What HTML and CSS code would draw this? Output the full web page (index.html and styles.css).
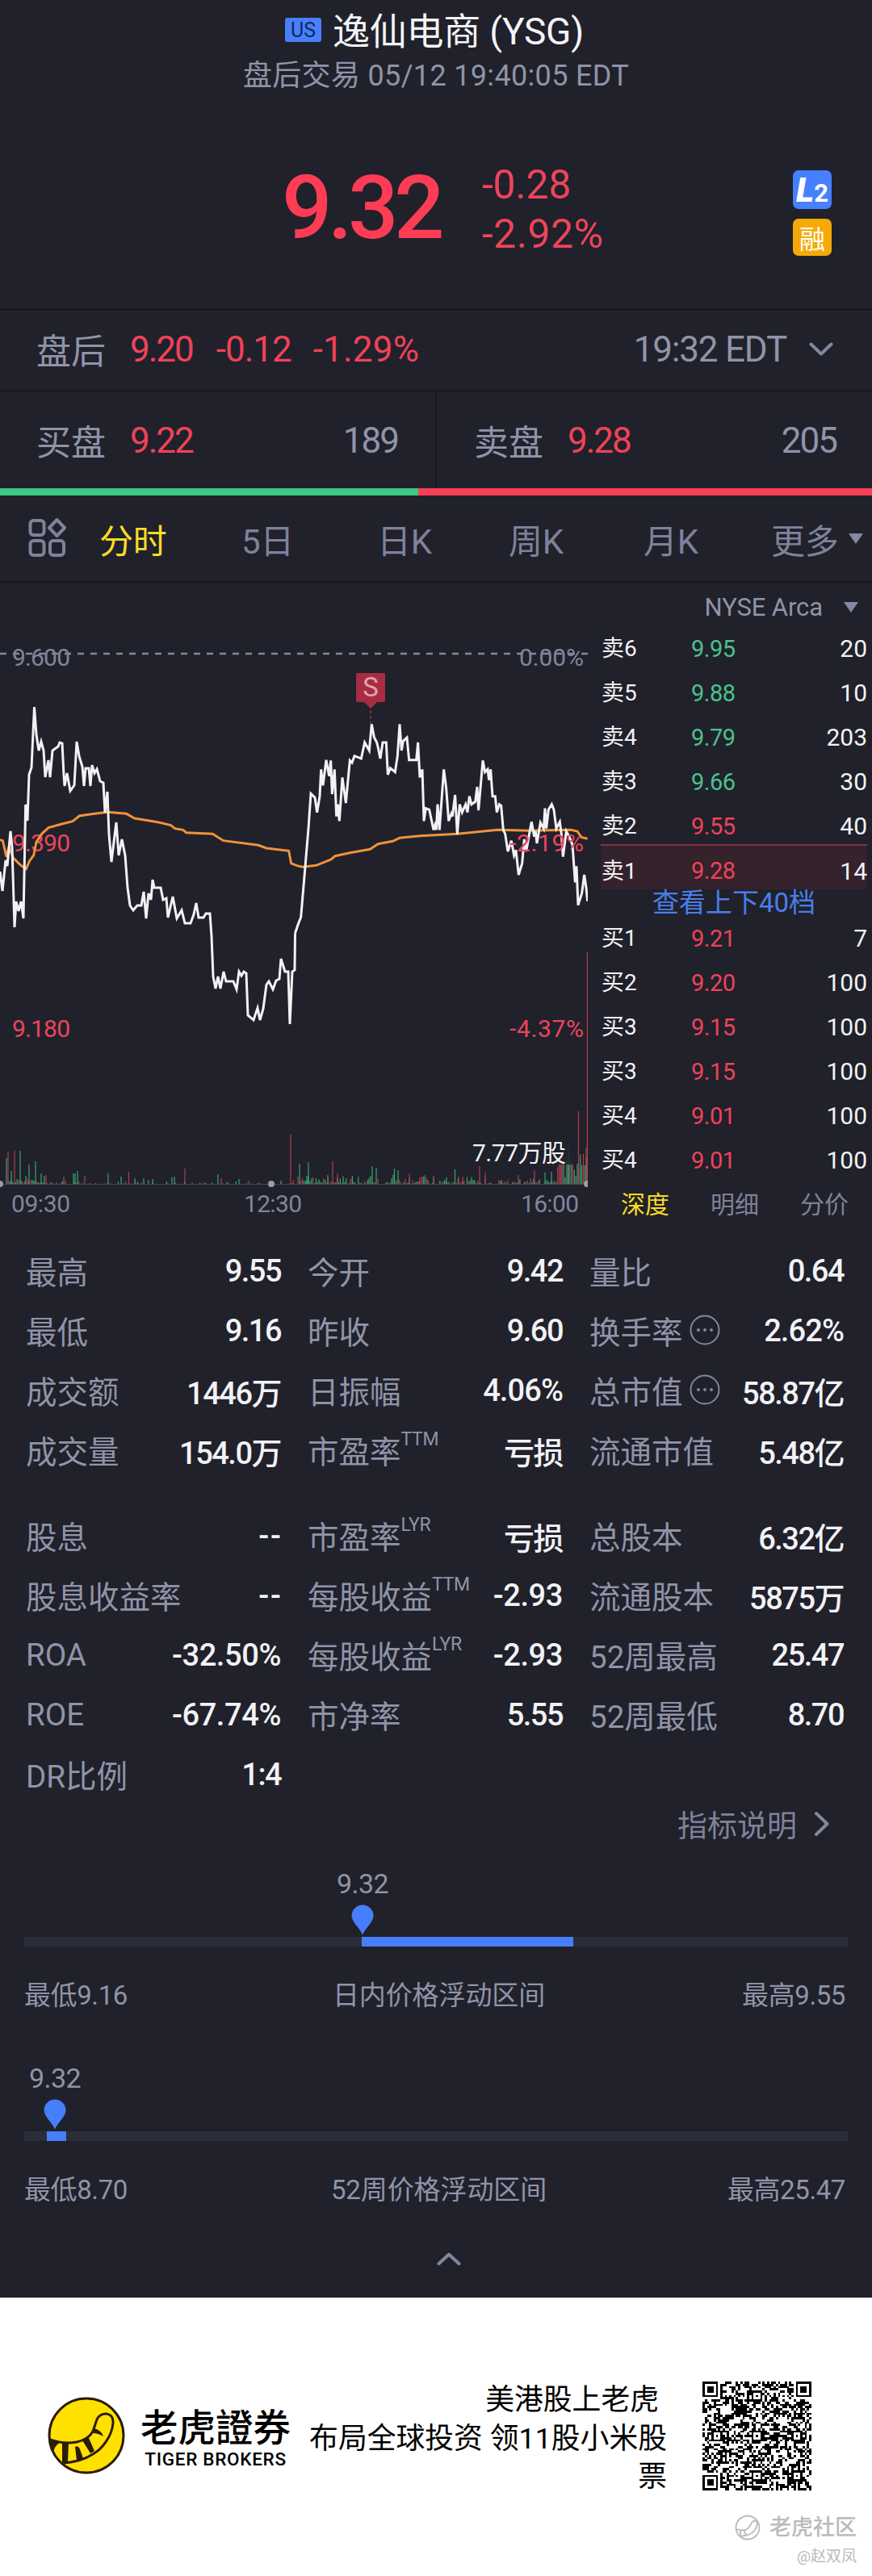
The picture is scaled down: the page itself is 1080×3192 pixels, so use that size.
FILE: index.html
```html
<!DOCTYPE html>
<html lang="zh-CN">
<head>
<meta charset="utf-8">
<title>逸仙电商 (YSG)</title>
<link rel="stylesheet" href="styles.css">
</head>
<body>
<main class="app">
  <header class="head">
    <div class="title"><span class="us">US</span><h1>逸仙电商 (YSG)</h1></div>
    <div class="session">盘后交易 05/12 19:40:05 EDT</div>
    <div class="quote">
      <div class="price">9.32</div>
      <div class="change"><span>-0.28</span><span class="pct">-2.92%</span></div>
      <div class="badges"><span class="badge l2"><i>L</i><b>2</b></span><span class="badge rong">融</span></div>
    </div>
  </header>

  <section class="after">
    <span class="lbl">盘后</span><span class="n r">9.20</span><span class="n r chg">-0.12</span><span class="n r pct">-1.29%</span>
    <span class="n time">19:32 EDT</span>
    <svg class="chev" width="30" height="18" viewBox="0 0 30 18"><path d="M2.500 2.500 15 14.500 27.500 2.500"/></svg>
  </section>

  <section class="bidask">
    <div class="side"><span class="lbl">买盘</span><span class="n r">9.22</span><span class="n qty">189</span></div>
    <div class="side"><span class="lbl">卖盘</span><span class="n r">9.28</span><span class="n qty">205</span></div>
  </section>
  <div class="ratio"><span style="width:48%"></span></div>

  <nav class="tabs">
    <svg class="grid-ico" width="48" height="50" viewBox="0 0 48 50"><rect x="2.500" y="3" width="17" height="18" rx="4"/><rect x="2.500" y="28" width="17" height="18" rx="4"/><rect x="27" y="28" width="17" height="18" rx="4"/><path d="M35.500 2 45 12 35.500 22 26 12Z"/></svg>
    <span class="on">分时</span><span>5日</span><span>日K</span><span>周K</span><span>月K</span><span>更多</span>
    <i class="tri"></i>
  </nav>

  <section class="market">
    <svg class="chart" width="728" height="800" viewBox="0 723 728 800">
      <path class="dash" d="M0 810H728"/>
      <g class="ax gray"><text x="15" y="825" textLength="72">9.600</text><text x="723" y="825" text-anchor="end" textLength="80">0.00%</text></g>
      <g class="ax red"><text x="15" y="1055" textLength="72">9.390</text><text x="15" y="1285" textLength="72">9.180</text><text x="723" y="1285" text-anchor="end" textLength="92">-4.37%</text></g>
      <path class="base" d="M0 1467.500H728"/>
      <g id="volume"></g>
      <g transform="translate(0 720) scale(.33333)"><polyline class="avg" points="0,962 10,965 24,1025 33,990 50,1030 75,1055 97,1070 110,1040 125,1020 135,970 155,940 180,917 230,903 270,893 295,873 340,866 400,859 470,865 500,882 590,897 635,908 650,920 680,925 692,935 790,940 830,965 960,982 990,993 1073,1003 1082,1050 1110,1060 1125,1063 1175,1057 1230,1035 1245,1022 1300,1010 1375,997 1405,977 1460,967 1485,955 1560,947 1700,940 1850,925 1965,928 2120,925 2145,930 2160,952 2183,958"/></g>
      <polyline class="line" points="0,1080 3,1104 7,1066 9,1073 13,1030 15,1050 18,1149 20,1117 23,1129 26,1117 29,1138 31.700,997 34,1017 36,960 39,951 42.500,876 45,910 48,930 51,919 54,930 56,963 60,942 62,963 65,930 72,925 74,920 77,921 79,960 80,974 83,958 87,980 92,973 95,919 98,937 102,950 104,974 106,952 110,952 112,974 114,948 117,958 120,953 124,968 128,970 130,1007 133,981 135,1034 138,1068 144,1019 147,1060 151,1040 155,1060 158,1100 161,1122 165,1128 170,1122 175,1122 178,1105 181,1138 184,1107 187,1115 189,1090 191,1100 199,1100 202,1115 206,1113 208,1137 214,1111 219,1138 225,1128 229,1144 236,1144 240,1133 243,1119 246,1137 252,1137 255,1132 260,1132 262,1160 264,1210 267,1225 270,1210 273,1225 277,1204 280,1216 289,1216 293,1226 296,1204 299,1209 302,1204 305,1206 307,1258 314,1264 319,1249 322,1264 326,1250 330,1220 333,1216 338,1226 342,1215 346,1213 348,1188 353,1204 357,1204 359,1269 362,1204 365,1202 365.500,1157"/>
      <g transform="translate(360 780) scale(.33333)"><polyline class="line" points="16,1130 28,1095 38,1070 50,930 66,740 75,610 90,625 98,680 108,620 113,520 120,580 132,485 143,545 149,487 154,612 163,520 170,695 175,650 181,712 192,550 205,645 220,487 228,495 237,470 262,480 275,420 292,450 301,352 310,400 320,420 325,440 333,480 342,420 355,420 361,540 370,515 388,530 397,470 405,352 412,450 418,415 432,402 440,485 467,485 473,420 480,550 489,520 495,712 502,665 515,670 531,745 540,715 541,745 546,650 553,745 569,520 578,590 587,712 597,685 601,695 611,615 619,762 628,650 637,680 650,650 657,680 664,620 672,650 686,640 693,585 698,672 714,487 722,530 732,520 737,560 743,520 750,620 760,620 766,680 775,650 782,655 790,745 797,760 807,825 820,785 830,840 837,820 847,912 860,870 868,780 875,825 895,715 905,770 910,750 915,795 928,718 940,740 945,665 950,740 958,670 970,650 978,670 987,740 1000,715 1006,760 1012,845 1024,750 1035,770 1047,800 1057,940 1062,880 1068,1025 1082,980 1091,912 1098,960 1103,1010"/></g>
      <g class="ax red"><text x="723" y="1055" text-anchor="end" textLength="92">-2.19%</text></g>
      <path class="flag" d="M443 834h32a2 2 0 0 1 2 2v32a2 2 0 0 1-2 2h-8l-8 8-8-8h-8a2 2 0 0 1-2-2v-32a2 2 0 0 1 2-2Z"/>
      <path class="flag-stem" d="M459 880V897"/>
      <text class="flag-t" x="459" y="863" text-anchor="middle">S</text>
      <rect class="volbox" x="580" y="1405" width="131" height="38"/>
      <text class="vol" x="585" y="1439" textLength="116">7.77万股</text>
      <g class="dots"><circle cx="0" cy="1467" r="4"/><circle cx="336" cy="1467" r="4"/><circle cx="727" cy="1467" r="4"/></g>
      <g class="ax gray"><text x="14" y="1502" textLength="73">09:30</text><text x="302" y="1502" textLength="72">12:30</text><text x="645" y="1502" textLength="72">16:00</text></g>
    </svg>
    <aside class="book">
      <div class="venue">NYSE Arca <i class="tri"></i></div>
      <div class="lv g"><span>卖6</span><b>9.95</b><em>20</em></div>
      <div class="lv g"><span>卖5</span><b>9.88</b><em>10</em></div>
      <div class="lv g"><span>卖4</span><b>9.79</b><em>203</em></div>
      <div class="lv g"><span>卖3</span><b>9.66</b><em>30</em></div>
      <div class="lv"><span>卖2</span><b>9.55</b><em>40</em></div>
      <div class="lv hot"><span>卖1</span><b>9.28</b><em>14</em></div>
      <div class="more">查看上下40档</div>
      <div class="lv"><span>买1</span><b>9.21</b><em>7</em></div>
      <div class="lv"><span>买2</span><b>9.20</b><em>100</em></div>
      <div class="lv"><span>买3</span><b>9.15</b><em>100</em></div>
      <div class="lv"><span>买3</span><b>9.15</b><em>100</em></div>
      <div class="lv"><span>买4</span><b>9.01</b><em>100</em></div>
      <div class="lv"><span>买4</span><b>9.01</b><em>100</em></div>
      <div class="btabs"><span class="on">深度</span><span>明细</span><span>分价</span></div>
    </aside>
  </section>

  <section class="stats">
    <dl><dt>最高</dt><dd>9.55</dd></dl><dl><dt>今开</dt><dd>9.42</dd></dl><dl><dt>量比</dt><dd>0.64</dd></dl>
    <dl><dt>最低</dt><dd>9.16</dd></dl><dl><dt>昨收</dt><dd>9.60</dd></dl><dl><dt>换手率<svg class="info" width="38" height="38" viewBox="0 0 38 38"><circle class="ring" cx="19" cy="19" r="17.500"/><circle cx="11" cy="19" r="2"/><circle cx="19" cy="19" r="2"/><circle cx="27" cy="19" r="2"/></svg></dt><dd class="pc">2.62%</dd></dl>
    <dl><dt>成交额</dt><dd>1446万</dd></dl><dl><dt>日振幅</dt><dd class="pc">4.06%</dd></dl><dl><dt>总市值<svg class="info" width="38" height="38" viewBox="0 0 38 38"><circle class="ring" cx="19" cy="19" r="17.500"/><circle cx="11" cy="19" r="2"/><circle cx="19" cy="19" r="2"/><circle cx="27" cy="19" r="2"/></svg></dt><dd>58.87亿</dd></dl>
    <dl><dt>成交量</dt><dd>154.0万</dd></dl><dl><dt>市盈率<sup>TTM</sup></dt><dd>亏损</dd></dl><dl><dt>流通市值</dt><dd>5.48亿</dd></dl>
  </section>
  <section class="stats second">
    <dl><dt>股息</dt><dd class="dash2">--</dd></dl><dl><dt>市盈率<sup>LYR</sup></dt><dd>亏损</dd></dl><dl><dt>总股本</dt><dd>6.32亿</dd></dl>
    <dl><dt>股息收益率</dt><dd class="dash2">--</dd></dl><dl><dt>每股收益<sup>TTM</sup></dt><dd class="neg">-2.93</dd></dl><dl><dt>流通股本</dt><dd>5875万</dd></dl>
    <dl><dt>ROA</dt><dd class="neg">-32.50%</dd></dl><dl><dt>每股收益<sup>LYR</sup></dt><dd class="neg">-2.93</dd></dl><dl><dt>52周最高</dt><dd>25.47</dd></dl>
    <dl><dt>ROE</dt><dd class="neg">-67.74%</dd></dl><dl><dt>市净率</dt><dd>5.55</dd></dl><dl><dt>52周最低</dt><dd>8.70</dd></dl>
    <dl><dt>DR比例</dt><dd>1:4</dd></dl>
  </section>
  <div class="explain">指标说明<svg class="chev" width="20" height="32" viewBox="0 0 20 32"><path d="M3 3 16.500 16 3 29"/></svg></div>

  <section class="range">
    <div class="track"><span class="fill" style="left:418px;width:262px"></span>
      <div class="pin" style="left:419px"><span>9.32</span><svg width="28" height="38" viewBox="0 0 28 38"><path d="M14 .5C6.500.5.500 6.500.500 13.500.500 22 10 28 14 37.500 18 28 27.500 22 27.500 13.500 27.500 6.500 21.500.500 14 .5Z"/></svg></div>
    </div>
    <div class="ends"><span>最低9.16</span><span class="mid">日内价格浮动区间</span><span>最高9.55</span></div>
  </section>
  <section class="range">
    <div class="track"><span class="fill" style="left:28px;width:24px"></span>
      <div class="pin" style="left:38px"><span>9.32</span><svg width="28" height="38" viewBox="0 0 28 38"><path d="M14 .5C6.500.5.500 6.500.500 13.500.500 22 10 28 14 37.500 18 28 27.500 22 27.500 13.500 27.500 6.500 21.500.500 14 .5Z"/></svg></div>
    </div>
    <div class="ends"><span>最低8.70</span><span class="mid">52周价格浮动区间</span><span>最高25.47</span></div>
  </section>
  <div class="collapse"><svg class="chev" width="30" height="18" viewBox="0 0 30 18"><path d="M2.500 15 15 3.500 27.500 15"/></svg></div>
</main>

<footer class="foot">
  <svg class="logo" width="96" height="98" viewBox="0 0 96 98">
    <circle cx="48" cy="49" r="46" fill="#ffe100" stroke="#2b1c08" stroke-width="3"/>
    <path d="M3 54Q20 60 36 57Q50 54 56 44Q58 38 61 29C65 19 82 19 81 33C80 50 67 66 56 72C44 80 32 82 20 83" fill="#ffe100" stroke="#2b1c08" stroke-width="3"/>
    <path d="M2 53 16 57Q8 62 7 70Q2 62 2 53ZM18 57 26 57 25 82 18 83ZM34 63C36 61 39 63 40 66L44 77 36 80ZM43 55 50 50 58 68 53 71ZM54 44 58 40Q67 43 69 50Q62 46 57 46Z" fill="#2b1c08"/>
  </svg>
  <div class="brand"><strong>老虎證券</strong><small>TIGER BROKERS</small></div>
  <div class="slogan"><p class="first">美港股上老虎</p><p>布局全球投资 领11股小米股</p><p>票</p></div>
  <svg class="qr" id="qr" width="135" height="135" viewBox="0 0 49 49" shape-rendering="crispEdges"></svg>
  <div class="mark">
    <div><svg width="32" height="32" viewBox="0 0 32 32"><circle cx="16" cy="16" r="14.500"/><path d="M2 18Q13 22 18 15L21 10Q25 5 28 10Q28 20 17 25L7 27M7 20V26M12 20 14 26"/></svg><span>老虎社区</span></div>
    <p>@赵双凤</p>
  </div>
</footer>
<script src="draw.js"></script>
</body>
</html>
```
FILE: styles.css
```css
* { box-sizing: border-box; margin: 0; padding: 0; }
body { width: 1080px; background: #fff; font-family: Roboto, "Noto Sans CJK SC", sans-serif; }
i, em { font-style: normal; }
.app { height: 2847px; background: #20212b; color: #9094a8; overflow: hidden; }

.head { height: 385px; border-bottom: 3px solid #171820; padding-top: 12px; }
.title { display: flex; align-items: center; justify-content: center; height: 54px; gap: 14px; padding-right: 4px; }
.us { width: 45px; height: 30px; line-height: 31px; border-radius: 3px; background: #4680fa; color: #14275e; font-size: 25px; text-align: center; margin-top: -4px; }
h1 { font-size: 46px; font-weight: 400; color: #f4f4f6; line-height: 54px; letter-spacing: -.2px; white-space: nowrap; }
.session { height: 56px; line-height: 56px; text-align: center; font-size: 36px; letter-spacing: .33px; }
.quote { display: flex; height: 180px; padding: 50px 50px 0 349px; color: #ff3c55; }
.price { width: 248px; font-size: 110px; font-weight: 500; line-height: 180px; margin-top: -4px; height: 180px; letter-spacing: -5.500px; }
.change { display: flex; flex-direction: column; font-size: 50px; line-height: 61px; padding-top: 27px; color: #ee4459; font-weight: 450; letter-spacing: -.2px; }
.change .pct { letter-spacing: .5px; }
.badges { margin-left: auto; padding-top: 39px; display: flex; flex-direction: column; gap: 12px; }
.badge { width: 48px; height: 48px; border-radius: 7px; display: flex; justify-content: center; align-items: center; color: #fff; }
.l2 { background: #4680fe; }
.l2 i { font: italic 900 42px Roboto, sans-serif; }
.l2 b { font: 700 31px Roboto, sans-serif; margin-top: 8px; }
.rong { background: #f6aa08; font-size: 32px; }

.n { font-size: 44px; font-weight: 450; letter-spacing: -2px; }
.lbl { font-size: 43px; width: 116px; margin-top: -2px; }
.r { color: #f04258; }
.after { height: 100px; border-bottom: 2px solid #171820; padding: 0 48px 2px 45px; display: flex; align-items: center; }
.after .n { margin-right: 29px; }
.after .chg { letter-spacing: -1px; margin-right: 27px; }
.after .pct { letter-spacing: .2px; }
.after .time { margin-left: auto; letter-spacing: -1.200px; margin-right: 28px; }
.chev { fill: none; stroke: #8487a0; stroke-width: 4; stroke-linecap: round; stroke-linejoin: round; }
.bidask { height: 120px; display: flex; }
.side { width: 541px; padding: 2px 46px 0 45px; display: flex; align-items: center; border-right: 2px solid #181922; }
.side + .side { border: 0; width: 539px; padding-left: 46px; padding-right: 44px; }
.qty { margin-left: auto; }
.ratio { height: 9px; background: #fb3f55; display: flex; }
.ratio span { background: #3ec988; }
.tabs { height: 109px; border-bottom: 3px solid #171820; padding: 0 11px 0 35px; display: grid; grid-template-columns: 88px 176px 168px 163px 167px 158px 90px 1fr; align-items: center; font-size: 42px; letter-spacing: -.3px; color: #7f829a; }
.grid-ico { fill: none; stroke: #7f829a; stroke-width: 4; stroke-linejoin: round; }
.on { color: #fbdb26; }
.tri { display: inline-block; border: 9px solid transparent; border-top: 13px solid #8588a0; border-bottom: 0; }
.tabs .tri { margin-left: 6px; }

.market { height: 800px; display: flex; }
.chart { display: block; font-family: Roboto, "Noto Sans CJK SC", sans-serif; }
.ax { font-size: 30px; }
.gray { fill: #82859c; }
.red { fill: #ea455e; }
.dash { stroke: #85889b; stroke-width: 2.500; stroke-dasharray: 8 8; }
.base { stroke: #444753; }
.avg { fill: none; stroke: #f0923a; stroke-width: 3; vector-effect: non-scaling-stroke; }
.line { fill: none; stroke: #f2f2f4; stroke-width: 3; vector-effect: non-scaling-stroke; }
.flag { fill: #a82c42; }
.flag-t { fill: #dfa3af; font-size: 33px; }
.flag-stem { stroke: #84293b; stroke-width: 2; stroke-dasharray: 4 3; }
.volbox { fill: #20212b; opacity: .85; }
.vol { fill: #f4f4f6; font-size: 30px; }
.dots { fill: #9c9da3; }
.up { stroke: #3aa475; }
.down { stroke: #b13f50; }
.book { width: 330px; margin-left: 16px; }
.venue { height: 53px; padding-top: 5px; display: flex; justify-content: flex-end; align-items: center; font-size: 31px; gap: 26px; padding-right: 11px; letter-spacing: -.1px; }
.lv { height: 55px; display: grid; grid-template-columns: 111px 1fr auto; align-items: center; font-size: 28px; color: #f04258; padding-left: 1px; }
.lv span { font-size: 28px; color: #f2f2f4; margin-top: -5px; }
.lv b { font-weight: 450; font-size: 29px; letter-spacing: -.5px; }
.lv em { color: #f2f2f4; font-size: 30px; font-weight: 450; }
.lv.g b { color: #4cc18e; }
.hot { background: #34222d; border-top: 2px solid #7f3343; height: 56px; margin-top: -5px; padding-top: 8px; }
.more { height: 33px; line-height: 34px; font-size: 33px; text-align: center; color: #4a7eea; }
.btabs { display: flex; justify-content: space-between; padding: 0 23px 0 25px; font-size: 30px; line-height: 56px; color: #7f829a; }

.stats { margin-top: 15px; padding: 0 34px 0 32px; display: grid; grid-template-columns: 316px 316px 315px; column-gap: 33px; grid-auto-rows: 74px; }
.stats.second { margin-top: 32px; }
dl { display: flex; justify-content: space-between; align-items: center; white-space: nowrap; }
dt { font-size: 38.500px; display: flex; align-items: center; margin-top: -2px; }
dd { font-size: 38px; font-weight: 500; color: #f2f2f4; letter-spacing: -1.500px; }
dd.pc { letter-spacing: -.9px; }
dd.neg { letter-spacing: -.4px; }
dd.dash2 { letter-spacing: 2px; margin-right: -2px; }
sup { font-size: 23px; margin-top: -24px; line-height: 30px; letter-spacing: -.3px; }
.info { margin-left: 8px; fill: #8487a0; }
.ring { fill: none; stroke: #8487a0; stroke-width: 2; }
.explain { height: 54px; padding-right: 52px; display: flex; justify-content: flex-end; align-items: center; gap: 21px; font-size: 37px; color: #7f829a; margin-top: -3px; }

.range { height: 241px; padding: 113px 30px 0; }
.track { position: relative; height: 12px; background: #2c2d3b; }
.fill { position: absolute; top: 0; height: 12px; background: #467ffc; }
.pin { position: absolute; bottom: 14px; transform: translateX(-50%); display: flex; flex-direction: column; align-items: center; font-size: 34px; line-height: 40px; letter-spacing: -.6px; gap: 6px; }
.pin svg { fill: #467ffc; }
.ends { display: grid; grid-template-columns: 1fr auto 1fr; margin-top: 37px; font-size: 33px; line-height: 48px; padding-right: 3px; letter-spacing: -.4px; }
.mid { margin-left: 10px; letter-spacing: -.1px; }
.ends span:last-child { text-align: right; }
.collapse { text-align: center; padding: 21px 0 0 31px; }

.foot { height: 345px; position: relative; background: #fff; color: #000; display: flex; padding-left: 59px; }
.logo { margin-top: 122px; }
.brand { width: 186px; margin: 128px 0 0 19px; display: flex; flex-direction: column; align-items: center; }
.brand strong { font: 500 46.500px/60px "Noto Sans CJK TC", sans-serif; }
.brand small { font-size: 22.500px; font-weight: 500; line-height: 22px; margin-top: 1px; letter-spacing: .7px; white-space: nowrap; }
.slogan { width: 447px; margin: 104px 0 0 19px; text-align: right; font-size: 35.800px; line-height: 47.500px; white-space: nowrap; }
.slogan .first { padding-right: 10px; }
.qr { margin: 104px 0 0 44px; }
.mark { position: absolute; right: 19px; bottom: 6px; text-align: right; color: #b9bac0; }
.mark div { display: flex; align-items: center; gap: 11px; font-size: 27px; font-weight: 500; line-height: 36px; }
.mark svg { fill: none; stroke: #b9bac0; stroke-width: 1.800; }
.mark p { font-size: 19px; line-height: 36px; }
```
FILE: draw.js
```js
const NS = 'http://www.w3.org/2000/svg';
let seed = 7;
const rnd = () => (seed = (seed * 16807) % 2147483647) / 2147483647;

// Minute volume bars: named spikes over a low floor
const floorY = 1467;
const vol = document.getElementById('volume');
function bar(x, h, up) {
  const p = document.createElementNS(NS, 'path');
  p.setAttribute('d', `M${x} ${floorY}v${-h}`);
  p.setAttribute('class', up ? 'up' : 'down');
  p.setAttribute('stroke-width', 1.2);
  vol.appendChild(p);
}
for (let x = 10; x < 727; x += 1.87) {
  const dens = x < 60 ? 1 : x > 690 ? 1 : x > 368 && x < 440 ? .9 : x > 440 ? .75 : x < 230 ? .5 : .25;
  if (rnd() > dens) continue;
  let h = 1 + rnd() * rnd() * 11;
  if (x > 690) h = 8 + rnd() * 30;
  else if (x < 230 && x > 60 || x > 230 && x < 365) h *= .5;
  bar(x.toFixed(1), h.toFixed(1), rnd() > .45);
}
[[8,32,1],[10,40,0],[14,16,1],[18,41,0],[25,41,1],[32,10,1],[36,24,1],[44,28,1],[51,13,1],[57,11,0],[79,9,0],
 [91,13,1],[93,13,1],[96,16,1],[105,10,0],[134,13,1],[150,9,1],[159.5,15,0],[167,7,1],[178,7,1],[189,6,1],
 [213,8,1],[216,9,1],[229,19,0],[270,12,1],[274,7,0],[296,6,1],[308,4,0],[348,4,1],[360,61,0],[371,25,1],
 [382,27,1],[380,10,1],[406,11,1],[412,28,0],[418,13,0],[461,22,1],[466,20,1],[488.5,19,1],[493,17,1],[507,13,0],
 [520,8,0],[537,10,0],[553,8,1],[563.5,18,1],[568,9,0],[573,9,0],[594,22,0],[601,14,0],[642,11,0],[662,17,0],
 [675,14,1],[683,15,1],[695,24,0],[704,45,1],[716.5,90,0],[726,45,0],[727.4,287,0]].forEach(b => bar(...b));

// QR symbol, version 8 (49 modules)
const N = 49;
const m = Array.from({ length: N }, () => Array.from({ length: N }, () => rnd() > .5));
const ring = (cx, cy, r, f) => {
  for (let y = -r; y <= r; y++) for (let x = -r; x <= r; x++) {
    const X = cx + x, Y = cy + y;
    if (X >= 0 && Y >= 0 && X < N && Y < N) m[Y][X] = f(Math.max(Math.abs(x), Math.abs(y)));
  }
};
for (let i = 0; i < N; i++) m[6][i] = m[i][6] = i % 2 === 0;
[[6, 24], [24, 6], [24, 24], [42, 24], [24, 42], [42, 42]].forEach(([x, y]) => ring(x, y, 2, d => d !== 1));
[[3, 3], [45, 3], [3, 45]].forEach(([x, y]) => ring(x, y, 4, d => d < 2 || d === 3 || d === 2 && false));
for (let y = 11; y < 15; y++) for (let x = 8; x < 13; x++) m[y][x] = false;
for (let y = 11; y < 15; y++) for (let x = 15; x < 20; x++) m[y][x] = true;
const q = document.createElementNS(NS, 'path');
q.setAttribute('d', m.map((row, y) => row.map((v, x) => v ? `M${x} ${y}h1v1h-1z` : '').join('')).join(''));
document.getElementById('qr').appendChild(q);
```
